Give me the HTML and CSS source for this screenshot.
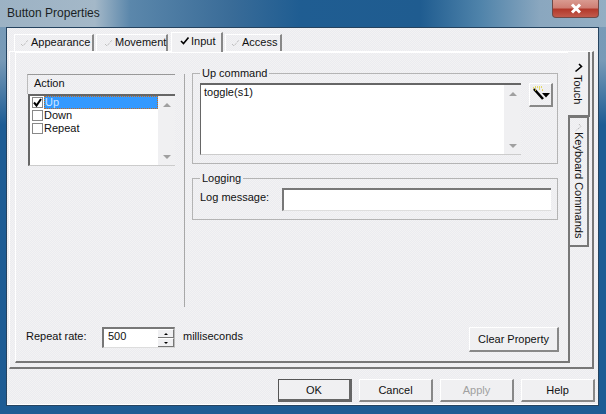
FILE: index.html
```html
<!DOCTYPE html>
<html lang="en">
<head>
<meta charset="utf-8">
<title>Button Properties</title>
<link rel="stylesheet" href="styles.css">
</head>
<body>
<div class="window">
  <header class="titlebar">
    <span class="title">Button Properties</span>
    <div class="close"><svg width="12" height="11" viewBox="0 0 12 11"><path d="M2 1.5 L10 9.5 M10 1.5 L2 9.5" stroke="#fff" stroke-width="3" fill="none"/></svg></div>
  </header>
  <div class="client">
    <div class="sheet">
      <div class="tabs">
        <div class="tab t-app"><svg class="tick" width="10" height="9" viewBox="0 0 10 9"><path d="M1 6 L3 8 L8 2" stroke="#aaa" fill="none" stroke-dasharray="1 1"/></svg>Appearance</div>
        <div class="tab t-mov"><svg class="tick" width="10" height="9" viewBox="0 0 10 9"><path d="M1 6 L3 8 L8 2" stroke="#aaa" fill="none" stroke-dasharray="1 1"/></svg>Movement</div>
        <div class="tab t-inp active"><svg class="tick" width="10" height="9" viewBox="0 0 10 9"><path d="M1 5 L3.5 7.5 L8.5 1.5" stroke="#000" stroke-width="1.6" fill="none"/></svg>Input</div>
        <div class="tab t-acc"><svg class="tick" width="10" height="9" viewBox="0 0 10 9"><path d="M1 6 L3 8 L8 2" stroke="#aaa" fill="none" stroke-dasharray="1 1"/></svg>Access</div>
      </div>
      <div class="frame">
        <div class="panel">
          <div class="top">
            <div class="action">
              <div class="action-head">Action</div>
              <div class="list">
                <div class="rows">
                  <div class="row"><span class="cb"><svg width="11" height="11" viewBox="0 0 11 11"><path d="M2 5.5 L4.5 8.5 L9 2" stroke="#000" stroke-width="2" fill="none"/></svg></span><span class="sel">Up</span></div>
                  <div class="row"><span class="cb"></span><span class="lbl">Down</span></div>
                  <div class="row"><span class="cb"></span><span class="lbl">Repeat</span></div>
                </div>
                <div class="vscroll"><i class="up"></i><i class="down"></i></div>
              </div>
            </div>
            <div class="divider"></div>
            <div class="groups">
              <fieldset class="group g-cmd">
                <legend>Up command</legend>
                <div class="cmd-row">
                  <div class="cmd">
                    <div class="cmd-text">toggle(s1)</div>
                    <div class="vscroll"><i class="up"></i><i class="down"></i></div>
                  </div>
                  <div class="wand">
                    <svg width="21" height="20" viewBox="0 0 21 20">
                      <path d="M4 5 L13 15" stroke="#000" stroke-width="2.6" fill="none"/>
                      <path d="M3 4h1M5 3h1M7 3h1M9 3h1M11 3h1M5 6h1M9 5h1M12 6h1" stroke="#e2d23a" stroke-width="1.5" fill="none"/>
                      <path d="M12 9 H20 L16 13.500 Z" fill="#000"/>
                    </svg>
                  </div>
                </div>
              </fieldset>
              <fieldset class="group g-log">
                <legend>Logging</legend>
                <div class="log-row">
                  <span class="log-label">Log message:</span>
                  <div class="log-input"></div>
                </div>
              </fieldset>
            </div>
          </div>
          <div class="foot">
            <span class="rate-label">Repeat rate:</span>
            <div class="spin">
              <span class="spin-val">500</span>
              <div class="spin-btns">
                <div class="spin-btn"><i class="up"></i></div>
                <div class="spin-btn"><i class="down"></i></div>
              </div>
            </div>
            <span class="ms">milliseconds</span>
            <button class="btn clear">Clear Property</button>
          </div>
        </div>
        <div class="vtabs">
          <div class="vtab on"><svg class="vtick" width="9" height="10" viewBox="0 0 9 10"><path d="M5 1 L7.500 3.500 L1.500 8.500" stroke="#000" stroke-width="1.6" fill="none"/></svg><span class="vtext">Touch</span></div>
          <div class="vtab off"><svg class="vtick" width="9" height="10" viewBox="0 0 9 10"><path d="M5 1 L7 3.500 L1.500 8" stroke="#aaa" fill="none" stroke-dasharray="1 1"/></svg><span class="vtext">Keyboard Commands</span></div>
        </div>
      </div>
      <div class="actions">
        <button class="btn dlg default">OK</button>
        <button class="btn dlg">Cancel</button>
        <button class="btn dlg disabled">Apply</button>
        <button class="btn dlg">Help</button>
      </div>
    </div>
  </div>
</div>
</body>
</html>
```

FILE: styles.css
```css
* { box-sizing: border-box; }
html, body { margin: 0; padding: 0; }
body {
  width: 606px;
  height: 414px;
  overflow: hidden;
  background: #fff;
  font-family: "Liberation Sans", Arial, sans-serif;
  font-size: 11px;
  color: #111;
}
.window {
  width: 606px;
  height: 414px;
  display: flex;
  flex-direction: column;
  background:
    linear-gradient(180deg, rgba(150,175,195,.75) 0, rgba(150,175,195,.75) 60px, rgba(150,175,195,0) 125px),
    linear-gradient(90deg, #1d5c94 0, #1d5c94 100%);
  border-radius: 5px 5px 0 0;
}
.titlebar {
  height: 27px;
  flex: none;
  display: flex;
  align-items: flex-start;
  padding-left: 7px;
  background: linear-gradient(90deg, #9cb2c4 0, #a4b8c8 95px, #5b87ab 130px, #3a6c98 230px, #1f5d92 300px, #1f5c90 420px, #4f83aa 480px, #8aa7bf 540px, #93aec3 606px);
}
.title {
  font-size: 12px;
  line-height: 26px;
  color: #1a1f24;
  flex: 1;
}
.close {
  width: 47px;
  height: 18px;
  margin-right: 7px;
  display: flex;
  align-items: center;
  justify-content: center;
  border: 1px solid #6e4a48;
  border-top: 0;
  border-radius: 0 0 4px 4px;
  background: linear-gradient(180deg, #d99a90 0, #cf7f74 45%, #b2392b 55%, #c25a4c 100%);
}
.client {
  flex: none;
  width: 593px;
  height: 379px;
  margin-left: 6px;
  border: 1px solid #25435f;
  background: #fff;
  padding: 0 0 1px 0;
}
.sheet {
  height: 100%;
  background: repeating-conic-gradient(#f3f3f3 0 25%, #ebebf0 0 50%) 0 0 / 2px 2px;
  padding: 3px 4px 0 2px;
  display: flex;
  flex-direction: column;
}
.tabs {
  display: flex;
  height: 20px;
  flex: none;
  padding-left: 5px;
  align-items: flex-end;
}
.tab {
  height: 17px;
  display: flex;
  align-items: center;
  color: #111;
  border-top: 1px solid #fff;
  border-left: 1px solid #fff;
  border-right: 2px solid #888;
  padding-left: 5px;
  padding-bottom: 2px;
  margin-right: 2px;
}
.tick { margin-right: 1px; flex: none; }
.t-app { width: 80px; }
.t-mov { width: 72px; padding-left: 7px; margin-right: 3px; }
.t-inp { width: 52px; margin-right: 2px; padding-left: 8px; }
.t-acc { width: 57px; margin-right: 0; padding-left: 5px; }
.tab.active {
  height: 20px;
  background: #f0f0f2;
  padding-bottom: 4px;
  margin-bottom: -1px;
  position: relative;
  z-index: 1;
}
.frame {
  flex: none;
  height: 318px;
  width: 585px;
  display: flex;
  border-top: 1px solid #fff;
  border-right: 2px solid #777;
  border-bottom: 2px solid #777;
  border-left: 1px solid #fff;
  padding: 0 0 4px 5px;
}
.panel {
  width: 555px;
  flex: none;
  height: 100%;
  border-top: 1px solid #fff;
  border-left: 1px solid #fff;
  border-right: 2px solid #777;
  border-bottom: 2px solid #777;
  padding: 21px 9px 0 11px;
  display: flex;
  flex-direction: column;
  position: relative;
}
.top { display: flex; height: 233px; flex: none; }
.action { width: 148px; flex: none; }
.action-head {
  height: 20px;
  border-top: 1px solid #999;
  border-left: 1px solid #bbb;
  padding-left: 6px;
  line-height: 17px;
}
.list {
  height: 72px;
  margin-left: 1px;
  display: flex;
  border-top: 2px solid #666;
  border-left: 2px solid #666;
  border-bottom: 1px solid #ccc;
  background: #fff;
}
.rows { flex: 1; padding-top: 0; min-width: 0; }
.row {
  height: 13px;
  display: flex;
  align-items: center;
  padding-left: 2px;
}
.cb {
  width: 11px;
  height: 11px;
  flex: none;
  border: 1px solid #888;
  background: #fff;
  display: flex;
  margin-right: 1px;
}
.cb svg { margin: -1px; flex: none; }
.row .lbl { line-height: 13px; }
.sel {
  flex: 1;
  height: 13px;
  line-height: 11px;
  background: #3399ff;
  color: #cfe6ff;
  border: 1px dotted #c26a20;
  padding-left: 0;
}
.vscroll {
  width: 17px;
  flex: none;
  background: #f0f0f2;
  display: flex;
  flex-direction: column;
  justify-content: space-between;
  align-items: center;
  padding: 7px 0 6px;
}
i.up, i.down { display: block; width: 0; height: 0; border-left: 4px solid transparent; border-right: 4px solid transparent; }
i.up { border-bottom: 4px solid #a0a0a0; }
i.down { border-top: 4px solid #a0a0a0; }
.divider { width: 1px; height: 233px; background: #a8a8a8; margin: 0 7px 0 9px; flex: none; }
.groups { flex: none; width: 366px; margin-top: -8px; }
.group {
  margin: 0;
  width: 366px;
  padding: 0 4px 0 7px;
  border: 1px solid #b4b4b4;
  min-width: 0;
}
.group legend { padding: 0 2px; margin-left: 0; line-height: 15px; }
.g-cmd { height: 98px; margin-bottom: 7px; padding-top: 2px; }
.cmd-row { display: flex; }
.cmd {
  width: 321px;
  height: 72px;
  display: flex;
  background: #fff;
  border-top: 2px solid #666;
  border-left: 1px solid #666;
  border-bottom: 1px solid #ccc;
}
.cmd-text { flex: 1; padding: 1px 3px; line-height: 13px; }
.wand {
  width: 24px;
  height: 24px;
  margin-left: 8px;
  border-top: 1px solid #fff;
  border-left: 1px solid #fff;
  border-right: 2px solid #888;
  border-bottom: 2px solid #888;
}
.wand svg { display: block; }
.g-log { height: 49px; padding-top: 2px; }
.log-row { display: flex; align-items: flex-start; height: 23px; }
.log-label { width: 82px; flex: none; line-height: 19px; }
.log-input {
  width: 269px;
  height: 23px;
  background: #fff;
  border-top: 2px solid #777;
  border-left: 2px solid #777;
  border-bottom: 1px solid #ddd;
}
.foot {
  display: flex;
  align-items: flex-start;
  height: 24px;
  margin-top: 20px;
  margin-left: -1px;
}
.rate-label { width: 76px; flex: none; line-height: 19px; }
.spin {
  width: 73px;
  height: 21px;
  flex: none;
  display: flex;
  background: #fff;
  border-top: 2px solid #777;
  border-left: 2px solid #777;
  border-right: 1px solid #bbb;
  border-bottom: 1px solid #ddd;
}
.spin-val { flex: 1; padding-left: 4px; line-height: 15px; }
.spin-btns { width: 16px; flex: none; display: flex; flex-direction: column; }
.spin-btn {
  flex: 1;
  background: #f0f0f2;
  border-right: 1px solid #777;
  border-bottom: 1px solid #777;
  border-top: 1px solid #fff;
  display: flex;
  align-items: center;
  justify-content: center;
}
.spin-btn i.up { border-left-width: 2px; border-right-width: 2px; border-bottom: 2px solid #000; }
.spin-btn i.down { border-left-width: 2px; border-right-width: 2px; border-top: 2px solid #000; }
.ms { margin-left: 8px; flex: 1; line-height: 19px; }
.btn {
  font: inherit;
  color: #111;
  background: #f0f0f2;
  padding: 0;
  border-top: 1px solid #fff;
  border-left: 1px solid #fff;
  border-right: 2px solid #888;
  border-bottom: 2px solid #888;
}
.clear { width: 90px; height: 25px; flex: none; }
.vtabs { width: 24px; flex: none; display: flex; flex-direction: column; }
.vtab {
  display: flex;
  flex-direction: column;
  align-items: center;
}
.vtab.on {
  height: 65px;
  width: 22px;
  margin-left: -2px;
  padding-top: 11px;
  background: #f0f0f2;
  border-right: 2px solid #777;
  border-bottom: 2px solid #777;
  position: relative;
}
.vtab.on .vtext { margin-top: 2px; }
.vtab.off {
  height: 130px;
  width: 20px;
  padding-top: 5px;
  margin-left: -1px;
  border-top: 1px solid #777;
  border-right: 2px solid #777;
  border-bottom: 2px solid #777;
  border-left: 1px solid #777;
}
.vtab.off .vtext { margin-top: -1px; }
.vtext { writing-mode: vertical-rl; line-height: 14px; }
.vtick { flex: none; }
.actions {
  display: flex;
  justify-content: flex-end;
  gap: 7px;
  padding-top: 10px;
  width: 586px;
}
.dlg { width: 74px; height: 23px; }
.default { border: 1px solid #555; border-right: 3px solid #666; border-bottom: 3px solid #666; }
.disabled { color: #a0a0a0; }
```
